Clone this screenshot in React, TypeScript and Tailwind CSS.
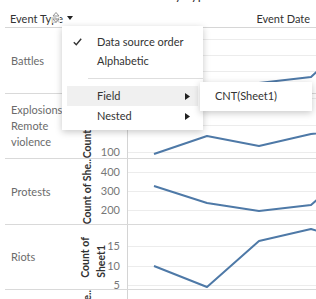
import React from 'react';

type Tick = { v: string; y: number };

const Chart = ({ h, grid, pts }: { h: number; grid: number[]; pts: [number, number][] }) => (
    <svg width={189} height={h} className="block">
        {grid.map((g) => (
            <line key={g} x1={0} x2={189} y1={g + 0.5} y2={g + 0.5} stroke="#ececec" strokeWidth={1} />
        ))}
        <polyline
            points={pts.map((p) => p.join(',')).join(' ')}
            fill="none"
            stroke="#4e79a7"
            strokeWidth={2}
            strokeLinejoin="round"
        />
    </svg>
);

const Row = ({
    h,
    label,
    title,
    titleW,
    ticks,
    pts,
}: {
    h: number;
    label: React.ReactNode;
    title: React.ReactNode;
    titleW: string;
    ticks: Tick[];
    pts: [number, number][];
}) => (
    <div className="flex border-b border-[#d9d9d9]" style={{ height: h }}>
        <div className="flex w-[70px] shrink-0 items-center pl-[6px] text-[11px] leading-[16px] text-[#6b6b6b]">
            {label}
        </div>
        <div className={`flex shrink-0 items-center justify-center ${titleW}`}>
            <div className="rotate-180 whitespace-nowrap text-[10.5px] font-bold leading-[16px] text-[#333] [writing-mode:vertical-rl]">
                {title}
            </div>
        </div>
        <div className="relative flex-1">
            {ticks.map((t) => (
                <span
                    key={t.v}
                    className="absolute right-[7px] -translate-y-1/2 text-[11px] leading-[12px] text-[#777]"
                    style={{ top: t.y }}
                >
                    {t.v}
                </span>
            ))}
        </div>
        <div className="w-[189px] shrink-0 border-l border-[#d4d4d4]">
            <Chart h={h - 1} grid={ticks.map((t) => t.y)} pts={pts} />
        </div>
    </div>
);

const Caret = () => (
    <svg width="5" height="7" viewBox="0 0 5 7" className="block">
        <path d="M0 0 L5 3.5 L0 7 Z" fill="#222" />
    </svg>
);

const App = () => {
    return (
        <div className="relative h-[299px] w-[316px] overflow-hidden bg-white font-['Lato','Open_Sans',sans-serif]">
            {/* cropped sheet title */}
            <div className="h-[4px] overflow-hidden">
                <div className="-mt-[11px] pl-[168px] text-[13px] leading-[13px] text-[#333]">by Type</div>
            </div>

            {/* column header */}
            <div className="ml-[5px] flex h-[24px] items-center justify-between border-b border-[#d6d6d6] pl-[5px] pr-[6px] pt-[8px] text-[11px] text-[#333]">
                <div className="flex items-center">
                    <span className="relative">
                        Event Type
                        <svg width="8" height="11" viewBox="0 0 8 11" className="absolute left-[42px] top-[1px]">
                            <rect x="0" y="0" width="8" height="11" fill="#fff" opacity="0.7" />
                            <path d="M4 0.5 L7 4 H1 Z" fill="none" stroke="#888" strokeWidth="0.9" />
                            <path d="M4 10.5 L7 7 H1 Z" fill="none" stroke="#888" strokeWidth="0.9" />
                        </svg>
                    </span>
                    <svg width="6" height="4" viewBox="0 0 6 4" className="ml-[4px] -mt-[4px]">
                        <path d="M0 0 H6 L3 4 Z" fill="#222" />
                    </svg>
                </div>
                <span>Event Date</span>
            </div>

            <div className="pl-[5px]">
                <Row
                    h={66}
                    label="Battles"
                    title="Count of She.."
                    titleW="w-[24px]"
                    ticks={[
                        { v: '600', y: 11 },
                        { v: '500', y: 27 },
                        { v: '400', y: 43 },
                    ]}
                    pts={[[26, 62], [79, 72], [131, 55], [183, 49], [235, 0]]}
                />
                <Row
                    h={65}
                    label={<span>Explosions/ Remote violence</span>}
                    title="Count of She.."
                    titleW="w-[24px]"
                    ticks={[
                        { v: '300', y: 4 },
                        { v: '200', y: 31 },
                        { v: '100', y: 58 },
                    ]}
                    pts={[[26, 60], [79, 42], [131, 52], [183, 40], [235, 35]]}
                />
                <Row
                    h={66}
                    label="Protests"
                    title="Count of She.."
                    titleW="w-[24px]"
                    ticks={[
                        { v: '400', y: 13 },
                        { v: '300', y: 32 },
                        { v: '200', y: 51 },
                    ]}
                    pts={[[26, 27], [79, 44], [131, 52], [183, 46], [235, 0]]}
                />
                <Row
                    h={65}
                    label="Riots"
                    title={
                        <>
                            Count of
                            <br />
                            Sheet1
                        </>
                    }
                    titleW="w-[36px]"
                    ticks={[
                        { v: '15', y: 21 },
                        { v: '10', y: 41 },
                        { v: '5', y: 60 },
                    ]}
                    pts={[[26, 41], [79, 62], [131, 16], [183, 4], [235, 20]]}
                />
                <Row
                    h={66}
                    label="Strategic developments"
                    title="Count of She.."
                    titleW="w-[24px]"
                    ticks={[
                        { v: '40', y: 14 },
                        { v: '20', y: 40 },
                    ]}
                    pts={[[26, 30], [79, 35], [131, 28], [183, 33], [235, 30]]}
                />
            </div>

            {/* sort menu */}
            <div className="absolute left-[62px] top-[26px] w-[141px] bg-white pb-[4px] pt-[6px] text-[11px] text-[#333] shadow-[0_2px_7px_rgba(0,0,0,0.22)]">
                <div className="relative flex h-[20px] items-center pl-[35px]">
                    <svg width="9" height="8" viewBox="0 0 9 8" className="absolute left-[11px] top-[6px]">
                        <path d="M0.8 4.2 L3.3 6.8 L8.2 0.8" fill="none" stroke="#333" strokeWidth="1.4" />
                    </svg>
                    Data source order
                </div>
                <div className="flex h-[19px] items-center pl-[35px]">Alphabetic</div>
                <div className="my-[7px] ml-[26px] h-px bg-[#dedede]" />
                <div className="mx-[5px] flex h-[20px] items-center justify-between bg-[#f0f0f0] pl-[30px] pr-[8px]">
                    Field
                    <Caret />
                </div>
                <div className="mx-[5px] flex h-[20px] items-center justify-between pl-[30px] pr-[8px]">
                    Nested
                    <Caret />
                </div>
            </div>

            {/* submenu */}
            <div className="absolute left-[200px] top-[82px] flex h-[29px] w-[112px] items-center bg-white pl-[15px] text-[11px] text-[#333] shadow-[0_2px_7px_rgba(0,0,0,0.22)]">
                CNT(Sheet1)
            </div>
        </div>
    );
};

export default App;
